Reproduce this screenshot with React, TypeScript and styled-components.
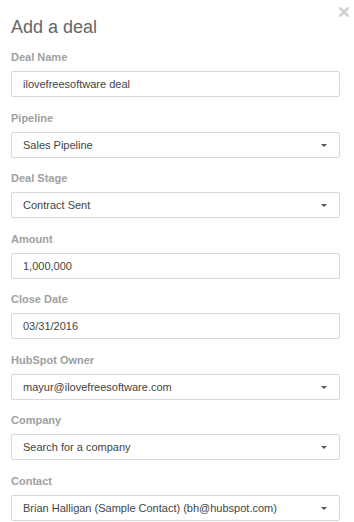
import React from "react";
import styled, { createGlobalStyle } from "styled-components";

const GlobalStyle = createGlobalStyle`
  html, body {
    margin: 0;
    padding: 0;
    background: #fff;
  }
  body {
    font-family: "Liberation Sans", Arial, sans-serif;
    -webkit-font-smoothing: antialiased;
  }
`;

interface FieldDef {
  label: string;
  value: string;
  select?: boolean;
}

const FIELDS: FieldDef[] = [
  { label: "Deal Name", value: "ilovefreesoftware deal" },
  { label: "Pipeline", value: "Sales Pipeline", select: true },
  { label: "Deal Stage", value: "Contract Sent", select: true },
  { label: "Amount", value: "1,000,000" },
  { label: "Close Date", value: "03/31/2016" },
  { label: "HubSpot Owner", value: "mayur@ilovefreesoftware.com", select: true },
  { label: "Company", value: "Search for a company", select: true },
  {
    label: "Contact",
    value: "Brian Halligan (Sample Contact) (bh@hubspot.com)",
    select: true,
  },
];

function Field({ label, value, select }: FieldDef) {
  return (
    <FieldWrap>
      <Label>{label}</Label>
      <Box>
        <BoxText>{value}</BoxText>
        {select && <Caret />}
      </Box>
    </FieldWrap>
  );
}

export default function App() {
  return (
    <>
      <GlobalStyle />
      <Panel>
        <CloseBtn aria-label="close">
          <svg width="10" height="10" viewBox="0 0 10 10">
            <path
              d="M1.5 1.5 L8.5 8.5 M8.5 1.5 L1.5 8.5"
              stroke="#d0d0d0"
              strokeWidth="2.6"
              strokeLinecap="square"
            />
          </svg>
        </CloseBtn>
        <Title>Add a deal</Title>
        <Form>
          {FIELDS.map((f) => (
            <Field key={f.label} {...f} />
          ))}
        </Form>
      </Panel>
    </>
  );
}

const Panel = styled.div`
  position: relative;
  width: 354px;
  height: 522px;
  overflow: hidden;
  padding: 17px 14px 0 11px;
  box-sizing: border-box;
`;

const CloseBtn = styled.span`
  position: absolute;
  top: 7px;
  right: 5px;
  display: flex;
  width: 10px;
  height: 10px;
`;

const Title = styled.h1`
  margin: 0;
  font-size: 18px;
  line-height: 20px;
  font-weight: 400;
  color: #666;
`;

const Form = styled.div`
  display: flex;
  flex-direction: column;
  gap: 13.5px;
  margin-top: 13px;
`;

const FieldWrap = styled.div`
  display: flex;
  flex-direction: column;
`;

const Label = styled.div`
  font-size: 11px;
  line-height: 14px;
  font-weight: 700;
  color: #a0a0a0;
  margin-bottom: 7px;
`;

const Box = styled.div`
  display: flex;
  align-items: center;
  height: 26px;
  box-sizing: border-box;
  border: 1px solid #d8d8d8;
  border-radius: 2px;
  padding: 0 12px 0 11px;
  background: #fff;
`;

const BoxText = styled.span`
  flex: 1;
  font-size: 11px;
  color: #444;
  white-space: nowrap;
  overflow: hidden;
`;

const Caret = styled.span`
  width: 0;
  height: 0;
  border-left: 3px solid transparent;
  border-right: 3px solid transparent;
  border-top: 3px solid #555;
  margin-top: 1px;
`;
